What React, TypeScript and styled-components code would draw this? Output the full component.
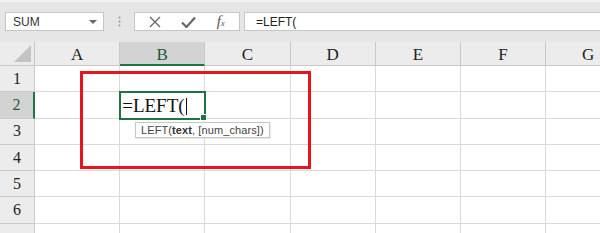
import { Fragment } from 'react';
import styled, { createGlobalStyle } from 'styled-components';

const GlobalStyle = createGlobalStyle`
  html, body {
    margin: 0;
    padding: 0;
    background: #e6e6e6;
  }
  #root {
    width: 600px;
    height: 233px;
    overflow: hidden;
  }
`;

const Page = styled.div`
  width: 600px;
  height: 233px;
  display: flex;
  flex-direction: column;
  background: #e6e6e6;
  overflow: hidden;
`;

const Toolbar = styled.div`
  height: 46px;
  box-sizing: border-box;
  padding: 10px 0 11px 5px;
  display: flex;
  align-items: stretch;
  border-top: 2px solid #f0f0f0;
`;

const NameBox = styled.div`
  width: 99px;
  box-sizing: border-box;
  background: #fff;
  border: 1px solid #c6c6c6;
  display: flex;
  align-items: center;
  justify-content: space-between;
  padding: 0 6px 0 7px;
  font-family: 'Liberation Sans', Arial, sans-serif;
  font-size: 12px;
  color: #333;
`;

const Caret = styled.span`
  width: 0;
  height: 0;
  border-left: 4px solid transparent;
  border-right: 4px solid transparent;
  border-top: 4px solid #666;
`;

const Grip = styled.div`
  width: 30px;
  display: flex;
  align-items: center;
  justify-content: center;
`;

const FuncButtons = styled.div`
  width: 106px;
  box-sizing: border-box;
  background: #fff;
  border: 1px solid #c6c6c6;
  display: flex;
  align-items: center;
  justify-content: space-around;
  padding: 0 4px;
  color: #666;
`;

const Fx = styled.span`
  font-family: 'Liberation Serif', 'Times New Roman', serif;
  font-style: italic;
  font-size: 15px;
  color: #555;
  sub {
    font-size: 9px;
    vertical-align: baseline;
  }
`;

const FormulaInput = styled.div`
  flex: 1;
  margin-left: 4px;
  box-sizing: border-box;
  background: #fff;
  border: 1px solid #c6c6c6;
  border-right: none;
  display: flex;
  align-items: center;
  padding-left: 11px;
  font-family: 'Liberation Sans', Arial, sans-serif;
  font-size: 12px;
  color: #222;
`;

const Sheet = styled.div`
  position: relative;
  flex: 1;
  display: grid;
  grid-template-columns: 35px repeat(7, 85.2px);
  grid-template-rows: 24px repeat(7, 26.3px);
  background: #fff;
`;

const HeaderCell = styled.div<{ $selected?: boolean; $row?: boolean }>`
  box-sizing: border-box;
  display: flex;
  align-items: center;
  justify-content: center;
  font-family: 'Liberation Serif', 'Times New Roman', serif;
  font-size: ${(p) => (p.$row ? '16px' : '17px')};
  color: ${(p) => (p.$selected ? '#1e5a37' : '#222')};
  background: ${(p) => (p.$selected ? '#d3d3d3' : '#ececec')};
  border-right: ${(p) => (p.$row && p.$selected ? '2px solid #217346' : '1px solid #c9c9c9')};
  border-bottom: ${(p) => (!p.$row && p.$selected ? '2px solid #217346' : '1px solid #c9c9c9')};
  padding-top: ${(p) => (p.$row ? '0' : '3px')};
`;

const Corner = styled.div`
  position: relative;
  background: #ececec;
  border-right: 1px solid #c9c9c9;
  border-bottom: 1px solid #c9c9c9;
  &::after {
    content: '';
    position: absolute;
    right: 3px;
    bottom: 3px;
    border-left: 17px solid transparent;
    border-bottom: 17px solid #c3c3c3;
  }
`;

const Cell = styled.div<{ $active?: boolean }>`
  position: relative;
  box-sizing: border-box;
  border-right: 1px solid #dadada;
  border-bottom: 1px solid #dadada;
  ${(p) =>
    p.$active &&
    `
    outline: 2px solid #217346;
    outline-offset: -1px;
    z-index: 2;
    display: flex;
    align-items: flex-end;
    padding: 0 0 1px 2px;
    font-family: 'Liberation Serif', 'Times New Roman', serif;
    font-size: 19px;
    color: #111;
    &::after {
      content: '';
      position: absolute;
      right: -3px;
      bottom: -3px;
      width: 5px;
      height: 5px;
      background: #217346;
      border: 1px solid #fff;
    }
  `}
`;

const TextCursor = styled.span`
  display: inline-block;
  width: 1px;
  height: 17px;
  margin: 0 0 2px 1px;
  background: #111;
`;

const Highlight = styled.div`
  position: absolute;
  left: 80px;
  top: 29px;
  width: 231px;
  height: 98px;
  box-sizing: border-box;
  border: 3px solid #e8141c;
  z-index: 3;
  pointer-events: none;
`;

const Tooltip = styled.div`
  position: absolute;
  left: 135px;
  top: 80px;
  height: 16px;
  box-sizing: border-box;
  padding: 0 5px 0 5px;
  display: flex;
  align-items: center;
  background: #fff;
  border: 1px solid #c6c6c6;
  box-shadow: 1px 1px 1px rgba(0, 0, 0, 0.08);
  font-family: 'Liberation Sans', Arial, sans-serif;
  font-size: 11px;
  letter-spacing: 0.1px;
  color: #444;
  white-space: nowrap;
  z-index: 4;
  b {
    color: #333;
  }
`;

const columns = ['A', 'B', 'C', 'D', 'E', 'F', 'G'];
const rows = [1, 2, 3, 4, 5, 6];

const App = () => {
  return (
    <Page>
      <GlobalStyle />
      <Toolbar>
        <NameBox>
          SUM
          <Caret />
        </NameBox>
        <Grip>
          <svg width="3" height="11" viewBox="0 0 3 11">
            <circle cx="1.5" cy="1.5" r="1" fill="#9a9a9a" />
            <circle cx="1.5" cy="5.5" r="1" fill="#9a9a9a" />
            <circle cx="1.5" cy="9.5" r="1" fill="#9a9a9a" />
          </svg>
        </Grip>
        <FuncButtons>
          <svg width="12" height="12" viewBox="0 0 12 12">
            <path d="M1 1 L11 11 M11 1 L1 11" stroke="#666" strokeWidth="1.3" fill="none" />
          </svg>
          <svg width="15" height="12" viewBox="0 0 15 12">
            <path d="M1 6.5 L5.5 11 L14 1.5" stroke="#666" strokeWidth="2.2" fill="none" />
          </svg>
          <Fx>
            f<sub>x</sub>
          </Fx>
        </FuncButtons>
        <FormulaInput>=LEFT(</FormulaInput>
      </Toolbar>
      <Sheet>
        <Corner />
        {columns.map((c) => (
          <HeaderCell key={c} $selected={c === 'B'}>
            {c}
          </HeaderCell>
        ))}
        {rows.map((r) => (
          <Fragment key={r}>
            <HeaderCell $row $selected={r === 2}>
              {r}
            </HeaderCell>
            {columns.map((c) => {
              const active = r === 2 && c === 'B';
              return (
                <Cell key={`${c}${r}`} $active={active}>
                  {active && (
                    <>
                      =LEFT(
                      <TextCursor />
                    </>
                  )}
                </Cell>
              );
            })}
          </Fragment>
        ))}
        {/* next row only peeks in at the bottom edge */}
        <HeaderCell $row />
        {columns.map((c) => (
          <Cell key={`${c}7`} />
        ))}
        <Highlight />
        <Tooltip>
          LEFT(<b>text</b>, [num_chars])
        </Tooltip>
      </Sheet>
    </Page>
  );
};

export default App;
